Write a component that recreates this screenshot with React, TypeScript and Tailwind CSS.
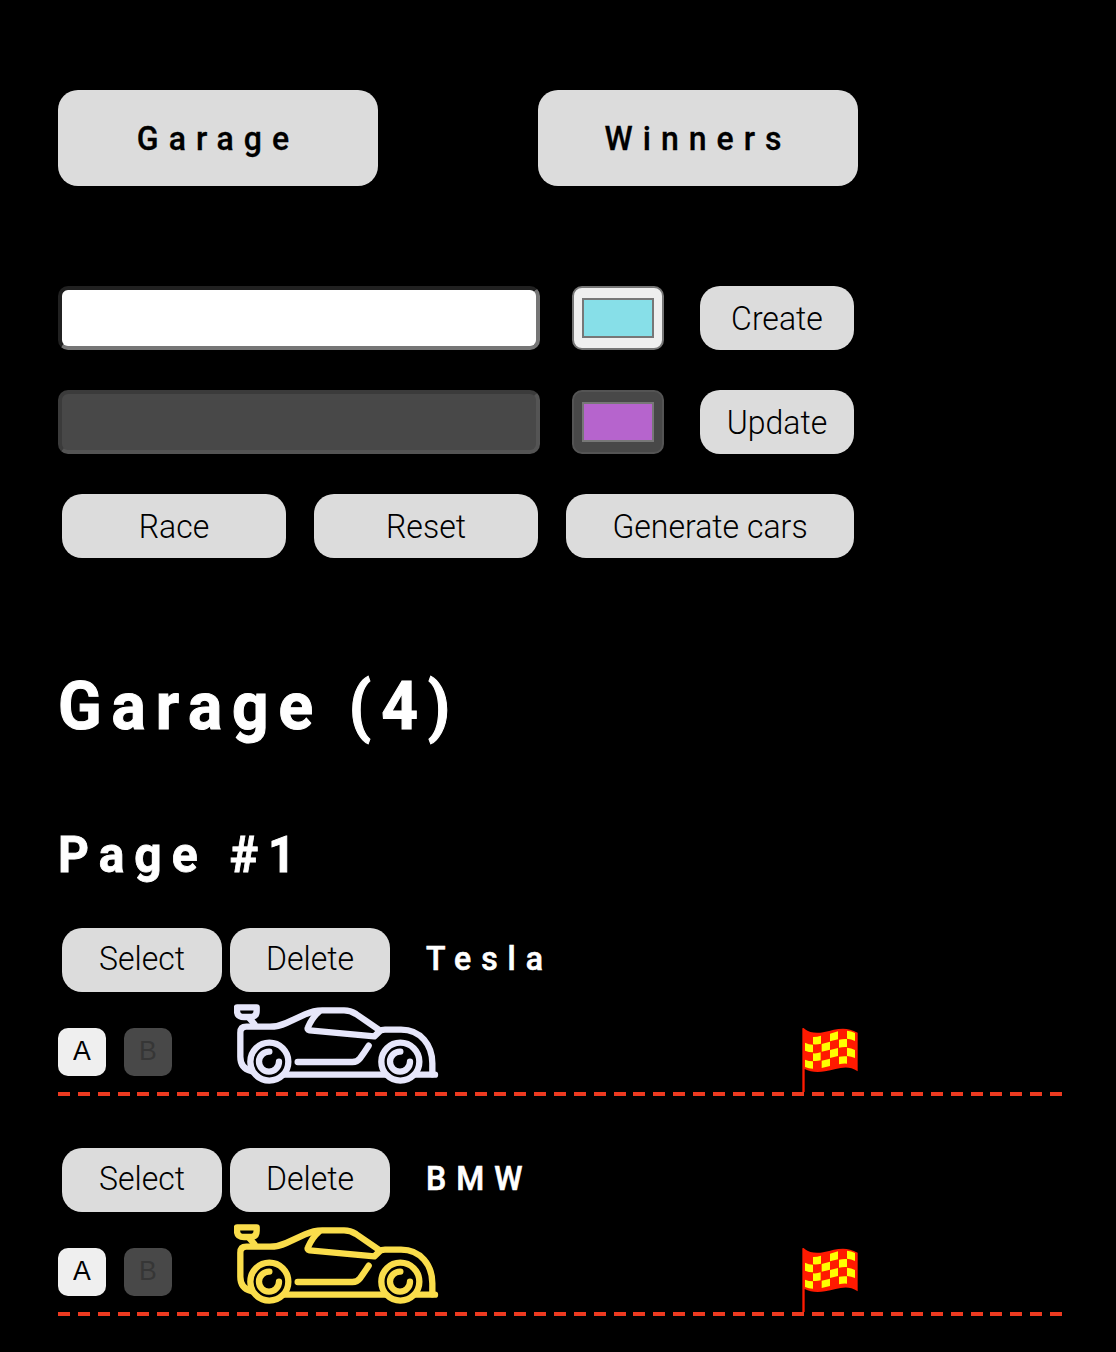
import type { ReactNode } from "react";

const btn =
  "flex h-16 shrink-0 items-center justify-center rounded-[20px] bg-[#dcdcdc] text-[32px] font-light text-black";
const navBtn =
  "flex h-24 w-80 items-center justify-center rounded-[20px] bg-[#dcdcdc] text-[32px] font-medium tracking-[10px] text-black [-webkit-text-stroke:0.3px_black]";

function Label({ children }: { children: ReactNode }) {
  return <span className="inline-block origin-[50%_80%] scale-y-[1.03]">{children}</span>;
}

function Car({ color }: { color: string }) {
  return (
    <svg
      className="mt-[11px] ml-[62px] h-[82px] w-[205px] shrink-0"
      viewBox="27 24 615 246"
      fill="none"
      stroke={color}
      strokeWidth="19"
      strokeLinecap="round"
      strokeLinejoin="round"
    >
      <path d="M36 37H95V47Q95 66 75 66H57Q36 66 36 47Z" />
      <path d="M72 68L88 87" />
      <path d="M78 228Q46 219 46 185V113Q46 95 64 95H135Q160 95 184 84L240 58Q266 46 292 46H357Q376 46 393 57L461 104" />
      <path d="M280 52Q262 67 249 97Q245 104 254 106L448 124L466 107Q470 104 480 104H528C588 104 622 151 622 205V238" />
      <path d="M182 239H478M576 239H630" />
      <path d="M218 201H382Q397 201 405 190Q416 175 431 152" />
      <circle cx="133" cy="200" r="57" />
      <circle cx="526" cy="200" r="57" />
      <path d="M133 170A30 30 0 1 0 162 200" />
      <path d="M526 170A30 30 0 1 0 555 200" />
    </svg>
  );
}

function Flag() {
  return (
    <svg className="absolute top-[35px] left-[742px] h-[66px] w-[60px]" viewBox="30 36 180 198">
      <path d="M37 40Q41 37 44 42C60 54 80 56 103 51C138 43 166 32 203 53V169C168 146 140 165 105 169C82 173 60 171 44 162V231H37Z" fill="#ff1a00" />
      <g fill="#ffff00">
        <path d="M69 66Q82 66 93 62V86Q82 89 69 88Z" />
        <path d="M120 56L144 49V73L120 79Z" />
        <path d="M171 47Q184 48 195 54V78Q184 72 171 71Z" />
        <path d="M45 83Q56 89 69 89V112Q56 112 45 107Z" />
        <path d="M95 87L120 80V104L95 110Z" />
        <path d="M147 74Q159 71 171 72V96Q159 95 147 98Z" />
        <path d="M69 115Q82 116 92 112V136Q82 139 69 138Z" />
        <path d="M120 105L144 99V123L120 129Z" />
        <path d="M171 98Q184 99 195 105V129Q184 124 171 123Z" />
        <path d="M45 134Q56 139 69 139V161Q56 161 45 156Z" />
        <path d="M95 137L120 131V153L95 159Z" />
        <path d="M147 125Q159 123 171 124V146Q159 145 147 148Z" />
      </g>
    </svg>
  );
}

function Track({ name, color }: { name: string; color: string }) {
  return (
    <section className="mb-[52px]">
      <div className="flex items-center gap-2 pl-1">
        <button className={`${btn} w-40 pb-[2px]`}>
          <Label>Select</Label>
        </button>
        <button className={`${btn} w-40 pb-[2px]`}>
          <Label>Delete</Label>
        </button>
        <span className="ml-7 pb-[2px] text-[32px] font-medium tracking-[10px] text-white [-webkit-text-stroke:0.6px_white]">
          <Label>{name}</Label>
        </span>
      </div>
      <div className="relative flex h-[100px] items-start">
        <button className="mt-9 flex size-12 items-center justify-center rounded-[10px] bg-[#efefef] pb-[3px] font-['Liberation_Sans',sans-serif] text-[26.67px] text-black">
          <Label>A</Label>
        </button>
        <button
          disabled
          className="mt-9 ml-[18px] flex size-12 items-center justify-center rounded-[10px] bg-[#484848] pb-[3px] font-['Liberation_Sans',sans-serif] text-[26.67px] text-[#363636]"
        >
          <Label>B</Label>
        </button>
        <Car color={color} />
        <Flag />
      </div>
      <div className="h-1 w-[1004px] bg-[repeating-linear-gradient(90deg,#ed3a20_0_12px,transparent_12px_19.84px)]" />
    </section>
  );
}

export default function App() {
  return (
    <main className="h-[1352px] overflow-hidden bg-black pt-[90px] pl-[58px] font-['Roboto',sans-serif]">
      <nav className="flex gap-40">
        <button className={`${navBtn} pt-[2px]`}>
          <Label>Garage</Label>
        </button>
        <button className={`${navBtn} pt-[2px]`}>
          <Label>Winners</Label>
        </button>
      </nav>
      <div className="mt-[100px] flex">
        <input className="h-16 w-[482px] rounded-[10px] border-4 border-t-[#212121] border-r-[#767676] border-b-[#767676] border-l-[#212121] bg-white px-2 text-[32px] text-black" />
        <div className="ml-8 h-16 w-[92px] rounded-[10px] border-2 border-[#767676] bg-[#efefef] px-2 py-[10px]">
          <div className="h-10 border-2 border-[#777] bg-[#87dfe8]" />
        </div>
        <button className={`${btn} ml-9 w-[154px] pt-[2px]`}>
          <Label>Create</Label>
        </button>
      </div>
      <div className="mt-10 flex">
        <input
          disabled
          className="h-16 w-[482px] rounded-[10px] border-4 border-t-[#3b3b3b] border-r-[#545454] border-b-[#545454] border-l-[#3b3b3b] bg-[#484848]"
        />
        <div className="ml-8 h-16 w-[92px] rounded-[10px] border-2 border-[#545454] bg-[#484848] px-2 py-[10px]">
          <div className="h-10 border-2 border-[#777] bg-[#b664cd]" />
        </div>
        <button className={`${btn} ml-9 w-[154px] pt-[2px]`}>
          <Label>Update</Label>
        </button>
      </div>
      <div className="mt-10 flex gap-7 pl-1">
        <button className={`${btn} w-56 pt-[2px]`}>
          <Label>Race</Label>
        </button>
        <button className={`${btn} w-56 pt-[2px]`}>
          <Label>Reset</Label>
        </button>
        <button className={`${btn} w-72 pt-[2px]`}>
          <Label>Generate cars</Label>
        </button>
      </div>
      <h1 className="mt-[110px] h-20 text-[64px] leading-[80px] font-bold tracking-[9.9px] text-white [-webkit-text-stroke:1px_white]">
        <Label>Garage (4)</Label>
      </h1>
      <h2 className="mt-[78px] mb-[42px] h-[60px] text-[48px] leading-[60px] font-bold tracking-[10px] text-white [-webkit-text-stroke:0.8px_white]">
        <Label>Page #1</Label>
      </h2>
      <Track name="Tesla" color="#e6e6fa" />
      <Track name="BMW" color="#fadd4b" />
    </main>
  );
}
